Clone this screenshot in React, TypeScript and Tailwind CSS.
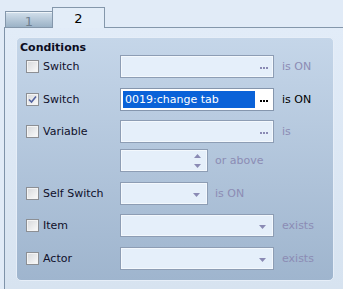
import React from "react";

const Dots = ({ on }: { on?: boolean }) => (
  <div className="flex gap-[1px] mt-[3px]">
    {[0, 1, 2].map((i) => (
      <div key={i} className={`w-[2px] h-[2px] ${on ? "bg-black" : "bg-[#8a8ab4]"}`} />
    ))}
  </div>
);

const Down = () => (
  <svg width="7" height="4" viewBox="0 0 7 4" className="block">
    <polygon points="0,0 7,0 3.5,4" fill="#8a8ab4" />
  </svg>
);

const Check = ({ checked }: { checked?: boolean }) => (
  <div className="w-[13px] h-[13px] shrink-0 border border-[#8c8f94] bg-gradient-to-br from-[#d6d8db] to-[#fbfbfb] shadow-[inset_0_0_0_1px_#f4f4f4] flex items-center justify-center">
    {checked && (
      <svg width="9" height="9" viewBox="0 0 9 9">
        <polyline points="1,4.5 3.5,7 8,1.5" fill="none" stroke="#5262a0" strokeWidth="1.6" />
      </svg>
    )}
  </div>
);

const Field = ({ w, children }: { w: string; children?: React.ReactNode }) => (
  <div className={`${w} h-[23px] border border-[#8d9db4] bg-[#e5effa] shadow-[inset_0_0_0_1px_#f3f8fd] flex items-center justify-end pr-[5px]`}>
    {children}
  </div>
);

const Suffix = ({ text, on, ml }: { text: string; on?: boolean; ml: string }) => (
  <span className={`${ml} ${on ? "text-black" : "text-[#8c8cb4]"}`}>{text}</span>
);

const Row = ({ children, mt }: { children: React.ReactNode; mt: string }) => (
  <div className={`flex items-center h-[23px] ${mt}`}>{children}</div>
);

const Label = ({ checked, text }: { checked?: boolean; text: string }) => (
  <div className="flex items-center w-[103px] pl-[9px] shrink-0">
    <Check checked={checked} />
    <span className="ml-[4px] text-[#10102a]">{text}</span>
  </div>
);

export default function App() {
  return (
    <div
      className="w-[343px] h-[289px] bg-[#e1ebf7] overflow-hidden text-[11px] leading-[13px] flex flex-col"
      style={{ fontFamily: '"DejaVu Sans", Verdana, sans-serif' }}
    >
      <div className="flex items-end h-[28px] ml-[4px] pl-[1px] border-b border-[#8497ab] shrink-0">
        <div className="w-[48px] h-[16px] border-t border-l border-r border-[#8497ab] bg-gradient-to-b from-[#d3e0ec] to-[#9bb2c6] shadow-[inset_0_1px_0_#eef4f9] flex items-center justify-center text-[#6f7f8e] text-[13px] pt-[3px]">
          1
        </div>
        <div className="relative -ml-px -mb-px w-[53px] h-[21px] border-t border-l border-r border-[#8497ab] bg-[#e3edf8] flex items-center justify-center text-black text-[13px] pt-[1px]">
          2
        </div>
      </div>
      <div className="flex-1 ml-[4px] border-l border-[#7f93a9] bg-gradient-to-b from-[#e2ecf8] to-[#d7e3f0] pl-[11px] pt-[9px]">
        <div className="w-[318px] h-[244px] rounded-[5px] border border-[#e6eef8] bg-gradient-to-b from-[#c5d6e9] to-[#9fb5ce]">
          <div className="pl-[3px] pt-[3px] h-[17px] font-bold leading-[14px] text-[#0c0c1e]">Conditions</div>
          <Row mt="mt-0">
            <Label text="Switch" />
            <Field w="w-[154px]">
              <Dots />
            </Field>
            <Suffix text="is ON" ml="ml-[8px]" />
          </Row>
          <Row mt="mt-[10px]">
            <Label checked text="Switch" />
            <div className="w-[154px] h-[23px] border border-[#8596ad] bg-white flex items-center">
              <div className="ml-[2px] w-[132px] h-[17px] bg-[#0a62d8] text-white leading-[17px] pl-[2px]">
                0019:change tab
              </div>
              <div className="flex-1 flex justify-end pr-[5px]">
                <Dots on />
              </div>
            </div>
            <Suffix text="is ON" on ml="ml-[8px]" />
          </Row>
          <Row mt="mt-[9px]">
            <Label text="Variable" />
            <Field w="w-[154px]">
              <Dots />
            </Field>
            <Suffix text="is" ml="ml-[8px]" />
          </Row>
          <Row mt="mt-[6px]">
            <div className="w-[103px] shrink-0" />
            <Field w="w-[88px]">
              <div className="flex flex-col gap-[6px] mr-[1px]">
                <svg width="7" height="4" viewBox="0 0 7 4" className="block">
                  <polygon points="0,4 7,4 3.5,0" fill="#8a8ab4" />
                </svg>
                <Down />
              </div>
            </Field>
            <Suffix text="or above" ml="ml-[7px]" />
          </Row>
          <Row mt="mt-[10px]">
            <Label text="Self Switch" />
            <Field w="w-[88px]">
              <div className="mr-[2px] mt-[3px]">
                <Down />
              </div>
            </Field>
            <Suffix text="is ON" ml="ml-[7px]" />
          </Row>
          <Row mt="mt-[9px]">
            <Label text="Item" />
            <Field w="w-[154px]">
              <div className="mr-[2px] mt-[3px]">
                <Down />
              </div>
            </Field>
            <Suffix text="exists" ml="ml-[8px]" />
          </Row>
          <Row mt="mt-[10px]">
            <Label text="Actor" />
            <Field w="w-[154px]">
              <div className="mr-[2px] mt-[3px]">
                <Down />
              </div>
            </Field>
            <Suffix text="exists" ml="ml-[8px]" />
          </Row>
        </div>
      </div>
    </div>
  );
}
